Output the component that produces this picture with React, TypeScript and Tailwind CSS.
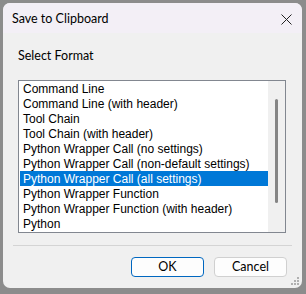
import React from "react";

const FORMATS = [
  "Command Line",
  "Command Line (with header)",
  "Tool Chain",
  "Tool Chain (with header)",
  "Python Wrapper Call (no settings)",
  "Python Wrapper Call (non-default settings)",
  "Python Wrapper Call (all settings)",
  "Python Wrapper Function",
  "Python Wrapper Function (with header)",
  "Python",
];

const SELECTED = 6;

export default function App() {
  return (
    <div className="w-[306px] h-[294px] bg-[#8c8c8c] pt-[3px] pl-[3px]">
      <div
        className="relative w-[299px] h-[285px] rounded-[7px] overflow-hidden bg-[#f0f0f0] flex flex-col"
        style={{ fontFamily: 'Lato, "Open Sans", sans-serif' }}
      >
        {/* title bar */}
        <div className="h-[30px] bg-[#f3eff6] flex items-center justify-between pl-[9px] pr-[10px] pt-[2px] shrink-0">
          <span className="text-[12.5px] text-black">Save to Clipboard</span>
          <svg width="11" height="11" viewBox="0 0 11 11" className="text-[#222]">
            <path d="M0.5 0.5 L10.5 10.5 M10.5 0.5 L0.5 10.5" stroke="currentColor" strokeWidth="1" />
          </svg>
        </div>

        <div className="flex flex-col px-[15px] pt-[15px]">
          <span className="text-[12.5px] leading-[16px] text-black">Select Format</span>

          <div className="mt-[16px] flex h-[153px] w-[268px] border border-[#828790] bg-white">
            <ul
              className="flex-1 pl-[1px] text-[12px] leading-[15px] text-black"
              style={{ fontFamily: '"Liberation Sans", Arial, sans-serif' }}
            >
              {FORMATS.map((f, i) => (
                <li
                  key={f}
                  className={
                    i === SELECTED
                      ? "h-[15px] pl-[3px] pt-px bg-[#0078d7] text-white whitespace-nowrap"
                      : "h-[15px] pl-[3px] pt-px whitespace-nowrap"
                  }
                >
                  {f}
                </li>
              ))}
            </ul>
            <div className="w-[17px] bg-[#f0f0f0] flex justify-center pt-[18px]">
              <div className="w-[3px] h-[104px] bg-[#858585] rounded-full" />
            </div>
          </div>
        </div>

        <div className="mx-[10px] mt-[12px] h-px bg-[#d4d4d4]" />

        <div className="flex justify-end gap-[10px] pr-[15px] mt-[11px]">
          <button className="w-[73px] h-[20px] rounded-[4px] border border-[#0067c0] bg-[#fdfdfd] text-[12.5px] text-black leading-none">
            OK
          </button>
          <button className="w-[73px] h-[20px] rounded-[4px] border border-[#d0d0d0] bg-[#fdfdfd] text-[12.5px] text-black leading-none">
            Cancel
          </button>
        </div>

        {/* resize grip */}
        <svg width="8" height="8" viewBox="0 0 8 8" className="absolute right-[3px] bottom-[3px]">
          <g fill="#b0b0b0">
            <rect x="6" y="0" width="2" height="2" />
            <rect x="3" y="3" width="2" height="2" />
            <rect x="6" y="3" width="2" height="2" />
            <rect x="0" y="6" width="2" height="2" />
            <rect x="3" y="6" width="2" height="2" />
            <rect x="6" y="6" width="2" height="2" />
          </g>
        </svg>
      </div>
    </div>
  );
}
